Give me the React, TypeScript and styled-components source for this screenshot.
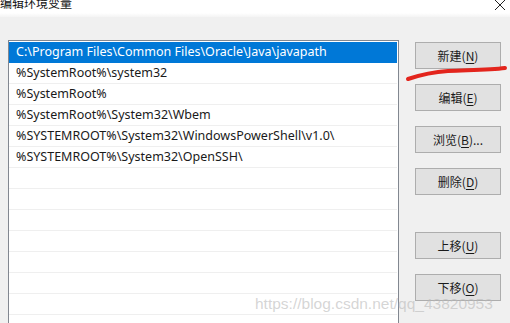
import React from 'react';
import styled, { createGlobalStyle } from 'styled-components';

const GlobalStyle = createGlobalStyle`
  html, body {
    margin: 0;
    padding: 0;
    background: #f0f0f0;
  }
  body {
    font-family: "Noto Sans", "Noto Sans CJK SC", sans-serif;
  }
`;

const Window = styled.div`
  position: relative;
  width: 510px;
  height: 323px;
  overflow: hidden;
  background: #f0f0f0;
  display: flex;
  flex-direction: column;
`;

const TitleBar = styled.div`
  height: 17px;
  flex: none;
  display: flex;
  justify-content: space-between;
  align-items: flex-start;
  background: linear-gradient(#ffffff 0, #ffffff 13px, #f4f4f4 17px);
`;

const Title = styled.span`
  font-family: "Noto Sans CJK SC", sans-serif;
  font-size: 12px;
  line-height: 12px;
  margin-top: -3px;
  color: #111;
`;

const CloseIcon = styled.svg`
  margin: 0 4px 0 0;
`;

const Body = styled.div`
  flex: 1;
  min-height: 0;
  display: flex;
  gap: 16px;
  padding: 23px 0 0 8px;
`;

const ListBox = styled.div`
  width: 389px;
  flex: none;
  background: #ffffff;
  border: 1px solid #828790;
  border-bottom: none;
  padding-top: 1px;
  overflow: hidden;
`;

const Row = styled.div<{ $selected?: boolean }>`
  height: 20px;
  line-height: 20px;
  padding-left: 7px;
  margin-right: 1px;
  border-bottom: 1px solid ${(p) => (p.$selected ? '#0078d7' : '#efefef')};
  background: ${(p) => (p.$selected ? '#0078d7' : 'transparent')};
  color: ${(p) => (p.$selected ? '#ffffff' : '#1a1a1a')};
  font-size: 12.5px;
  white-space: nowrap;
`;

const ButtonColumn = styled.div`
  width: 86px;
  flex: none;
  display: flex;
  flex-direction: column;
  gap: 15px;
  padding-top: 2px;
`;

const Button = styled.div<{ $spaceBefore?: number }>`
  height: 25px;
  margin-top: ${(p) => p.$spaceBefore ?? 0}px;
  background: #e1e1e1;
  border: 1px solid #adadad;
  display: flex;
  align-items: center;
  justify-content: center;
  font-family: "Noto Sans CJK SC", sans-serif;
  font-size: 12px;
  color: #1a1a1a;

  u {
    text-underline-offset: 2px;
  }
`;

const Scribble = styled.svg`
  position: absolute;
  left: 0;
  top: 0;
  pointer-events: none;
`;

const Watermark = styled.div`
  position: absolute;
  left: 255px;
  top: 295px;
  font-family: "Liberation Sans", Arial, sans-serif;
  font-size: 15.5px;
  color: rgba(185, 185, 185, 0.6);
  white-space: nowrap;
  pointer-events: none;
`;

const paths = [
  'C:\\Program Files\\Common Files\\Oracle\\Java\\javapath',
  '%SystemRoot%\\system32',
  '%SystemRoot%',
  '%SystemRoot%\\System32\\Wbem',
  '%SYSTEMROOT%\\System32\\WindowsPowerShell\\v1.0\\',
  '%SYSTEMROOT%\\System32\\OpenSSH\\',
];

const buttons: { label: string; key: string; suffix?: string; gap?: number }[] = [
  { label: '新建', key: 'N' },
  { label: '编辑', key: 'E' },
  { label: '浏览', key: 'B', suffix: '...' },
  { label: '删除', key: 'D' },
  { label: '上移', key: 'U', gap: 22 },
  { label: '下移', key: 'O' },
];

const App = () => {
  const rows = [...paths, ...Array(8).fill('')];
  return (
    <Window>
      <GlobalStyle />
      <TitleBar>
        <Title>编辑环境变量</Title>
        <CloseIcon width="12" height="11" viewBox="0 0 12 11">
          <path d="M1 0 L11 10 M11 0 L1 10" stroke="#222" strokeWidth="1" fill="none" />
        </CloseIcon>
      </TitleBar>
      <Body>
        <ListBox>
          {rows.map((p, i) => (
            <Row key={i} $selected={i === 0}>
              {p}
            </Row>
          ))}
        </ListBox>
        <ButtonColumn>
          {buttons.map((b) => (
            <Button key={b.key} $spaceBefore={b.gap}>
              {b.label}(<u>{b.key}</u>){b.suffix}
            </Button>
          ))}
        </ButtonColumn>
      </Body>
      <Scribble width="510" height="323" viewBox="0 0 510 323">
        <path
          d="M408 79 C 420 75, 432 72, 448 71 C 470 70, 490 70, 505 68"
          stroke="#e3251d"
          strokeWidth="4"
          strokeLinecap="round"
          fill="none"
        />
      </Scribble>
      <Watermark>https://blog.csdn.net/qq_43820953</Watermark>
    </Window>
  );
};

export default App;
